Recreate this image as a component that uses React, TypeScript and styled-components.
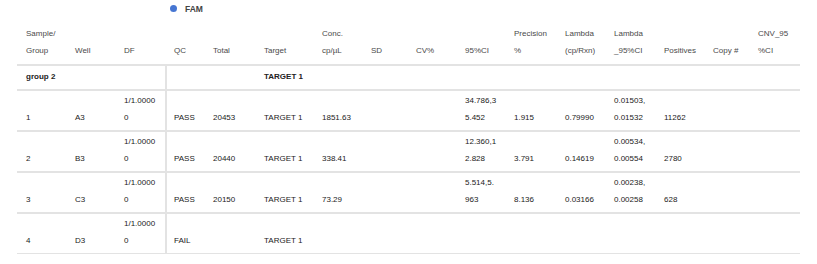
import React from "react";
import styled, { createGlobalStyle } from "styled-components";

const GlobalStyle = createGlobalStyle`
  html, body { margin: 0; padding: 0; background: #ffffff; }
  body { font-family: "Liberation Sans", Arial, sans-serif; }
`;

const COLS = "49px 49px 50px 39px 51px 58px 49px 45px 49px 49px 51px 49px 50px 49px 45px 51px";
const BORDER = "#e3e3e3";

const Page = styled.div`
  padding: 0 17px;
  width: 783px;
`;

const Legend = styled.div`
  height: 17px;
  display: flex;
  align-items: center;
  gap: 8px;
  padding-left: 153px;
  font-size: 8.5px;
  font-weight: 700;
  color: #444;
`;

const Dot = styled.span`
  width: 7px;
  height: 7px;
  border-radius: 50%;
  background: #4676d2;
`;

const Row = styled.div<{ $h: number; $thin?: boolean }>`
  display: grid;
  grid-template-columns: ${COLS};
  height: ${(p) => p.$h}px;
  border-bottom: ${(p) => (p.$thin ? 1 : 2)}px solid ${BORDER};
  font-size: 8px;
  line-height: 17px;
`;

const HeadCell = styled.div`
  align-self: end;
  padding: 0 0 5px 9px;
  color: #4a4a4a;
  white-space: nowrap;
`;

const Cell = styled.div<{ $divider?: boolean; $span?: number; $bold?: boolean }>`
  display: flex;
  flex-direction: column;
  justify-content: flex-end;
  padding: 0 0 4px ${(p) => (p.$divider ? 7 : 9)}px;
  color: #222;
  white-space: nowrap;
  font-weight: ${(p) => (p.$bold ? 700 : 400)};
  border-left: ${(p) => (p.$divider ? `2px solid ${BORDER}` : "none")};
  grid-column: ${(p) => (p.$span ? `span ${p.$span}` : "auto")};
`;

const GroupCell = styled(Cell)`
  justify-content: flex-start;
  padding-top: 2px;
  padding-bottom: 0;
`;

const headers: string[][] = [
  ["Sample/", "Group"],
  ["Well"],
  ["DF"],
  ["QC"],
  ["Total"],
  ["Target"],
  ["Conc.", "cp/\u00b5L"],
  ["SD"],
  ["CV%"],
  ["95%CI"],
  ["Precision", "%"],
  ["Lambda", "(cp/Rxn)"],
  ["Lambda", "_95%CI"],
  ["Positives"],
  ["Copy #"],
  ["CNV_95", "%CI"],
];

type Data = string[][];

const rows: Data[] = [
  [["1"], ["A3"], ["1/1.0000", "0"], ["PASS"], ["20453"], ["TARGET 1"], ["1851.63"], [], [], ["34.786,3", "5.452"], ["1.915"], ["0.79990"], ["0.01503,", "0.01532"], ["11262"], [], []],
  [["2"], ["B3"], ["1/1.0000", "0"], ["PASS"], ["20440"], ["TARGET 1"], ["338.41"], [], [], ["12.360,1", "2.828"], ["3.791"], ["0.14619"], ["0.00534,", "0.00554"], ["2780"], [], []],
  [["3"], ["C3"], ["1/1.0000", "0"], ["PASS"], ["20150"], ["TARGET 1"], ["73.29"], [], [], ["5.514,5.", "963"], ["8.136"], ["0.03166"], ["0.00238,", "0.00258"], ["628"], [], []],
  [["4"], ["D3"], ["1/1.0000", "0"], ["FAIL"], [], ["TARGET 1"], [], [], [], [], [], [], [], [], [], []],
];

export default function App() {
  return (
    <>
      <GlobalStyle />
      <Page>
        <Legend>
          <Dot />
          <span>FAM</span>
        </Legend>
        <Row $h={47}>
          {headers.map((h, i) => (
            <HeadCell key={i}>
              {h.map((l, j) => (
                <div key={j}>{l}</div>
              ))}
            </HeadCell>
          ))}
        </Row>
        <Row $h={23}>
          <GroupCell $span={3} $bold>group 2</GroupCell>
          <GroupCell $divider />
          <GroupCell />
          <GroupCell $bold>TARGET 1</GroupCell>
          {Array.from({ length: 10 }).map((_, i) => (
            <GroupCell key={i} />
          ))}
        </Row>
        {rows.map((r, ri) => (
          <Row key={ri} $h={39} $thin={ri === rows.length - 1}>
            {r.map((c, ci) => (
              <Cell key={ci} $divider={ci === 3}>
                {c.map((l, li) => (
                  <div key={li}>{l}</div>
                ))}
              </Cell>
            ))}
          </Row>
        ))}
      </Page>
    </>
  );
}
